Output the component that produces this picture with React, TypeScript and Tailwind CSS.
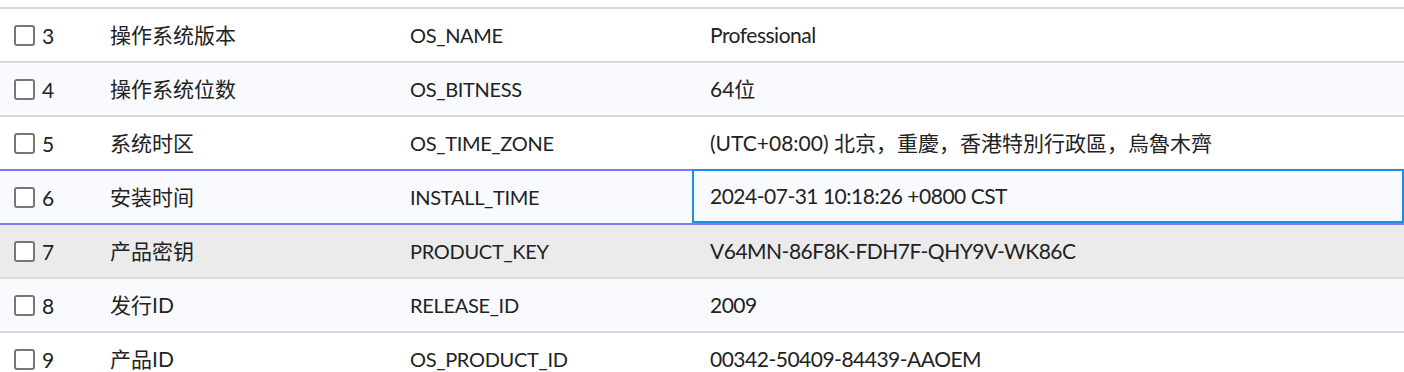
import React from "react";

type Row = {
	no: number;
	name: string;
	key: string;
	value: string;
};

const rows: Row[] = [
	{ no: 3, name: "操作系统版本", key: "OS_NAME", value: "Professional" },
	{ no: 4, name: "操作系统位数", key: "OS_BITNESS", value: "64位" },
	{
		no: 5,
		name: "系统时区",
		key: "OS_TIME_ZONE",
		value: "(UTC+08:00) 北京，重慶，香港特別行政區，烏魯木齊",
	},
	{
		no: 6,
		name: "安装时间",
		key: "INSTALL_TIME",
		value: "2024-07-31 10:18:26 +0800 CST",
	},
	{
		no: 7,
		name: "产品密钥",
		key: "PRODUCT_KEY",
		value: "V64MN-86F8K-FDH7F-QHY9V-WK86C",
	},
	{ no: 8, name: "发行ID", key: "RELEASE_ID", value: "2009" },
	{
		no: 9,
		name: "产品ID",
		key: "OS_PRODUCT_ID",
		value: "00342-50409-84439-AAOEM",
	},
];

const SELECTED = 6;
const HOVERED = 7;

const isLatin = (s: string) => /^[\x00-\x7f]+$/.test(s);

const Checkbox = () => (
	<span className="block w-[21px] h-[21px] rounded-[3px] border-2 border-[#777777] bg-white" />
);

export default function App() {
	return (
		<div
			className="w-[1404px] h-[372px] overflow-hidden bg-white text-[21px] text-[#222222]"
			style={{ fontFamily: '"Lato", "Noto Sans CJK SC", sans-serif' }}>
			{/* tail of the row above */}
			<div className="h-[9px] border-b-2 border-[#dadada]" />

			{rows.map((row) => {
				const selected = row.no === SELECTED;
				const purpleLine = selected || row.no + 1 === SELECTED;
				const bg =
					row.no === HOVERED
						? "bg-[#ebebeb]"
						: row.no % 2 === 0
							? "bg-[#f9fafd]"
							: "bg-white";

				return (
					<div
						key={row.no}
						className={`flex items-stretch h-[54px] border-b-2 ${bg} ${
							purpleLine ? "border-[#7a7af5]" : "border-[#dadada]"
						}`}>
						{/* Select + index */}
						<div className="w-[92px] shrink-0 flex items-center gap-[7px] pl-[14px]">
							<Checkbox />
							<span className="leading-none">{row.no}</span>
						</div>

						{/* Name */}
						<div className="w-[300px] shrink-0 flex items-center pl-[18px] whitespace-nowrap">
							{row.name}
						</div>

						{/* Key */}
						<div className="w-[300px] shrink-0 flex items-center pl-[18px] whitespace-nowrap text-[20px] tracking-[-0.3px]">
							{row.key}
						</div>

						{/* Value */}
						<div
							className={`flex-1 flex items-center whitespace-nowrap ${
								isLatin(row.value) ? "tracking-[-0.5px]" : ""
							} ${
								selected
									? "-mt-[2px] border-2 border-[#1e8fe6] pl-[16px]"
									: "pl-[18px]"
							}`}>
							{row.value}
						</div>
					</div>
				);
			})}
		</div>
	);
}
